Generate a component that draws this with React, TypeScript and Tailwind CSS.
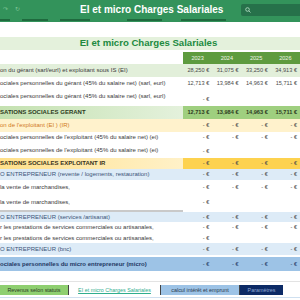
import React from "react";

type Row = {
  label: string;
  values: string[];
  h: string;
  rowBg?: string;
  labelBg?: string;
  valueBg?: string;
  labelCls?: string;
  valueCls?: string;
  tall?: boolean;
};

const dash = ["- €", "- €", "- €", "- €"];
const one = ["- €", "", "", ""];

const rows: Row[] = [
  {
    label: "on du gérant (sarl/eurl) et exploitant sous IS (EI)",
    values: ["28,250 €", "31,075 €", "33,250 €", "34,913 €"],
    h: "h-[13px]",
    rowBg: "bg-[#e2efda]",
  },
  {
    label: "ociales personnelles du gérant (45% du salaire net) (sarl, eurl)",
    values: ["12,713 €", "13,984 €", "14,963 €", "15,711 €"],
    h: "h-[12px]",
  },
  {
    label: "ociales personnelles du gérant (45% du salaire net) (sarl, eurl)",
    values: one,
    h: "h-[17px]",
    tall: true,
  },
  {
    label: "SATIONS SOCIALES GERANT",
    values: ["12,713 €", "13,984 €", "14,963 €", "15,711 €"],
    h: "h-[13px]",
    labelBg: "bg-gradient-to-r from-[#c4e1b0] to-[#e4f1dc]",
    valueBg: "bg-[#9fcf7f]",
    labelCls: "font-bold text-[#2d3a22]",
    valueCls: "font-bold text-[#2d3a22]",
  },
  {
    label: "on de l'exploitant (EI ) (IR)",
    values: dash,
    h: "h-[13px]",
    rowBg: "bg-[#fff2cc]",
    labelCls: "text-[#d0781c]",
  },
  {
    label: "ociales personnelles de l'exploitant (45% du salaire net) (ei)",
    values: dash,
    h: "h-[11px]",
  },
  {
    label: "ociales personnelles de l'exploitant (45% du salaire net) (ei)",
    values: one,
    h: "h-[15px]",
    tall: true,
  },
  {
    label: "SATIONS SOCIALES EXPLOITANT IR",
    values: dash,
    h: "h-[11px]",
    labelBg: "bg-gradient-to-r from-[#ffe08a] to-[#fff1c8]",
    valueBg: "bg-[#fdd24f]",
    labelCls: "font-bold text-[#3a3320]",
  },
  {
    label: "O ENTREPRENEUR (revente / logements, restauration)",
    values: dash,
    h: "h-[11px]",
    rowBg: "bg-[#ddebf7]",
    labelCls: "text-[#3b5478]",
  },
  {
    label: " la vente de marchandises,",
    values: dash,
    h: "h-[15px]",
  },
  {
    label: " la vente de marchandises,",
    values: one,
    h: "h-[15px]",
  },
];

const rows2: Row[] = [
  {
    label: "O ENTREPRENEUR (services /artisanat)",
    values: dash,
    h: "h-[10px]",
    rowBg: "bg-[#ddebf7]",
    labelCls: "text-[#3b5478]",
  },
  {
    label: "r les prestations de services commerciales ou artisanales,",
    values: dash,
    h: "h-[11px]",
  },
  {
    label: "r les prestations de services commerciales ou artisanales,",
    values: one,
    h: "h-[10px]",
  },
  {
    label: "O ENTREPRENEUR (bnc)",
    values: dash,
    h: "h-[12px]",
    rowBg: "bg-[#ddebf7]",
    labelCls: "text-[#3b5478]",
  },
];

function SheetRow({ r }: { r: Row }) {
  return (
    <div className={`grid grid-cols-[183px_repeat(4,1fr)] ${r.h} ${r.rowBg ?? ""}`}>
      <div
        className={`flex ${r.tall ? "items-start pt-[3px]" : "items-center"} overflow-hidden whitespace-nowrap text-[6px] ${
          r.labelBg ?? ""
        } ${r.labelCls ?? "text-[#3a3a3a]"}`}
      >
        {r.label}
      </div>
      {r.values.map((v, i) => (
        <div
          key={i}
          className={`flex ${r.tall ? "items-end pb-[3px]" : "items-center"} justify-end pr-[3px] ${
            r.valueBg ?? ""
          } ${r.valueCls ?? "text-[#4a4a4a]"}`}
        >
          {v}
        </div>
      ))}
    </div>
  );
}

export default function App() {
  return (
    <div className="h-[300px] w-[300px] overflow-hidden bg-white font-['Liberation_Sans',Arial,sans-serif] text-[5.6px]">
      {/* title bar */}
      <div className="h-[22px] bg-[#33935b]">
        <div className="flex h-[19px] items-center">
          <div className="flex w-[60px] items-center gap-[7px] pl-[3px] text-[6px] text-[#7cc495]">
            <span>↷</span>
            <span>↻</span>
          </div>
          <div className="flex-1 pl-[20px] text-[10px] font-bold text-white">EI et micro Charges Salariales</div>
          <div className="flex h-[12px] w-[59px] items-center rounded-l-[2px] bg-[#26714a] pl-[4px]">
            <svg width="6" height="6" viewBox="0 0 12 12" fill="none" stroke="#bfe3cb" strokeWidth="1.6">
              <circle cx="5" cy="5" r="3.6" />
              <path d="M7.7 7.7 11 11" />
            </svg>
          </div>
        </div>
        <div className="flex h-[2px] gap-[12px]">
          <div className="w-[10px] bg-[#1f6a3e]" />
          <div className="w-[26px] bg-[#1f6a3e]" />
          <div className="w-[30px] bg-[#1f6a3e]" />
          <div className="ml-[25px] w-[35px] bg-[#1f6a3e]" />
          <div className="ml-[7px] w-[45px] bg-[#1f6a3e]" />
        </div>
      </div>

      <div className="h-[15px]" />

      {/* sheet title */}
      <div className="flex h-[13px] items-center justify-center bg-[#e4f1dc] pr-[3px] text-[9.6px] font-bold text-[#218a3f]">
        EI et micro Charges Salariales
      </div>
      <div className="h-[2px]" />

      {/* header */}
      <div className="grid h-[12px] grid-cols-[183px_repeat(4,1fr)]">
        <div />
        {["2023", "2024", "2025", "2026"].map((y) => (
          <div key={y} className="flex items-center justify-center bg-[#5e9b3f] text-[#eef5e8]">
            {y}
          </div>
        ))}
      </div>

      {rows.map((r, i) => (
        <SheetRow key={i} r={r} />
      ))}
      <div className="h-[2px] w-[183px] bg-[#c9c9c9]" />
      {rows2.map((r, i) => (
        <SheetRow key={i} r={r} />
      ))}
      <div className="h-[2px]" />
      <SheetRow
        r={{
          label: "ociales personnelles du micro entrepreneur  (micro)",
          values: dash,
          h: "h-[14px]",
          rowBg: "bg-[#9dc3e6]",
          labelCls: "font-bold text-[#1f3864]",
          valueCls: "text-[#1f3864]",
        }}
      />

      <div className="h-[10px]" />
      <div className="h-px bg-[#e3e3e3]" />
      <div className="h-[3px]" />

      {/* sheet tabs */}
      <div className="flex h-[10px] items-stretch text-[5.4px]">
        <div className="flex w-[68px] items-center justify-center bg-[#8fcf70] text-[#2b3a24]">Revenus selon statuts</div>
        <div className="w-px bg-[#444]" />
        <div className="flex w-[91px] items-center justify-center text-[#2fae8e] underline">
          EI et micro Charges Salariales
        </div>
        <div className="w-px bg-[#444]" />
        <div className="flex w-[78px] items-center justify-center bg-[#9dc3e6] text-[#2a3a4d]">
          calcul intérêt et emprunt
        </div>
        <div className="w-px bg-[#444]" />
        <div className="flex w-[43px] items-center justify-center bg-[#0c2a66] text-[#8fa7d4]">Paramètres</div>
      </div>
      <div className="mt-[2px] h-px bg-[#cfe0f0]" />
    </div>
  );
}
